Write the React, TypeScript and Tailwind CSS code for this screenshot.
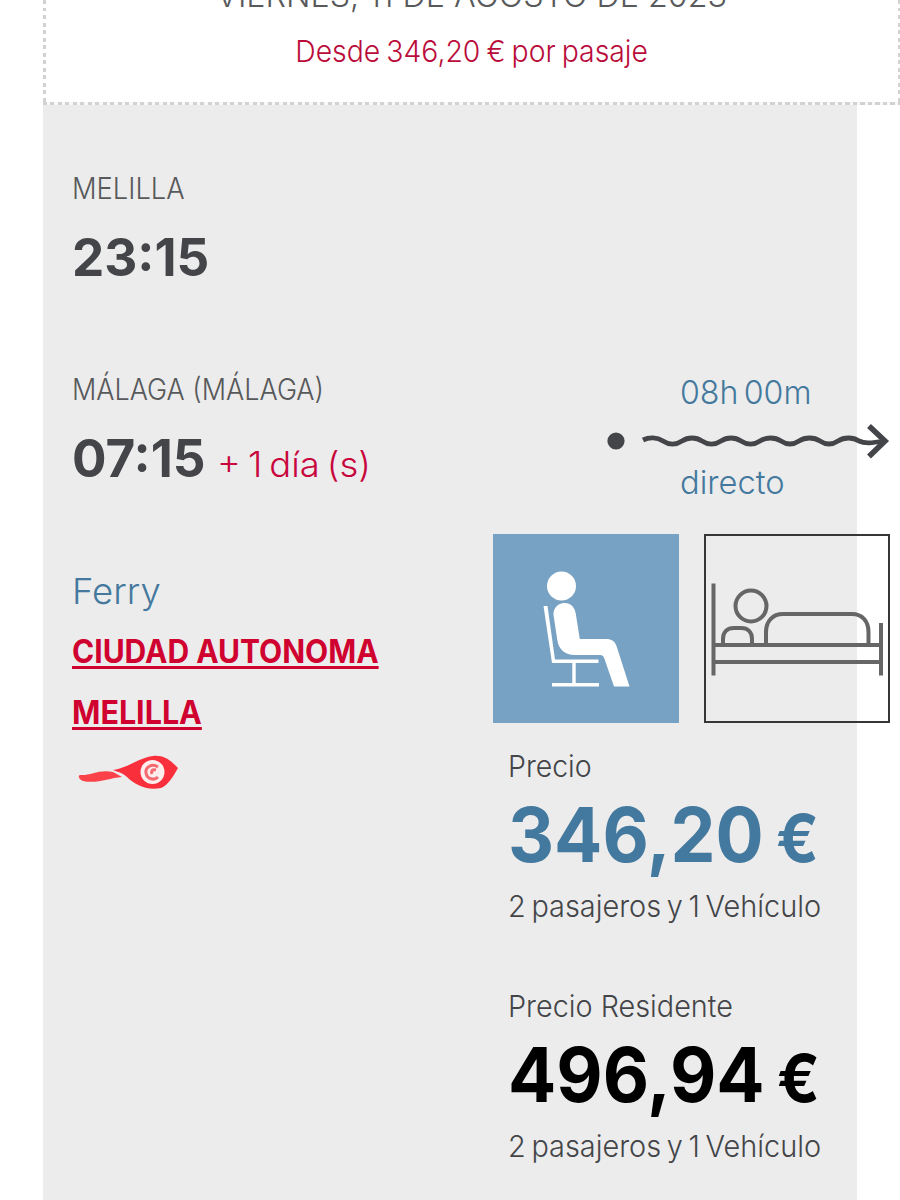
import type { ReactNode } from "react";

function Line({ className = "", fit = "", children }: { className?: string; fit?: string; children: ReactNode }) {
  return (
    <div className={`flex ${className}`}>
      <span className={`block origin-left whitespace-pre ${fit}`}>{children}</span>
    </div>
  );
}

function WaveArrow() {
  return (
    <svg width="290" height="40" viewBox="600 421 290 40" fill="none" stroke="#434548" className="block">
      <circle cx="616" cy="441" r="8.6" fill="#434548" stroke="none" />
      <path
        d="M643 440C649 437 657 437 663 441C669 445 676 445 682 441C688 437 696 437 702 441C708 445 715 445 721 441C727 437 735 437 741 441C747 445 754 445 760 441C766 437 775 437 781 441C787 445 793 445 799 441C805 437 814 437 820 441C826 445 832 445 838 441C844 437 853 437 859 441C865 444 872 443 884 441"
        strokeWidth="4.8"
      />
      <path d="M869 426L885 441L869 456.500" strokeWidth="5.6" />
    </svg>
  );
}

function SeatIcon() {
  return (
    <svg width="186" height="189" viewBox="0 0 186 189" fill="#fff" className="block">
      <circle cx="68.500" cy="52" r="14.500" />
      <path d="M50.500 72H54.500L62 125.500H105.500V129H82.700V149H106V152.500H59V149H79.300V129H59Z" />
      <path d="M60.500 81C60 74 65 69 71.500 69C78 69 82 73.500 82.800 80L86.800 105H113C119 105 121.500 107 123.500 112L136.500 152.500H121L111.500 125C110.500 122 109.500 121 107 121H82C72 121 65.500 115 64.300 106Z" />
    </svg>
  );
}

function BedIcon() {
  return (
    <svg width="182" height="185" viewBox="706 536 182 185" fill="none" stroke="#666" strokeWidth="4" className="block">
      <path d="M713.500 583.500V675.500M881 623V675.500M713 645H881M713 662H881" />
      <circle cx="751" cy="606" r="15.500" />
      <path d="M723 644V639C723 632 727 628 734 628H741C748 628 752 632 752 639V644" />
      <path d="M766 644V632C766 621 773 614 783 614H852C862 614 868.500 621 868.500 632V644" />
    </svg>
  );
}

function OperatorLogo() {
  return (
    <svg width="110" height="44" viewBox="0 0 110 44" className="block">
      <path d="M8 25C18 26 27 19 41 22L50 27C37 28 25 34 11 31C8 30 5 26 8 25Z" fill="#fa4248" />
      <path d="M41 20C56 18 66 8 81 6C92 5 98 10 106 18C101 27 96 35 89 38C74 41 62 34 55 27C51 23 46 22 41 20Z" fill="#f92f3b" />
      <circle cx="80.500" cy="22" r="12" fill="#fdeeee" />
      <path d="M86 17C80 13 73 17 74 23C75 29 82 31 86 27M84 20C80 19 79 21 80 24" fill="none" stroke="#f46a70" strokeWidth="3" />
    </svg>
  );
}

function Price({ label, labelFit, amount, color }: { label: string; labelFit: string; amount: string; color: string }) {
  return (
    <div className="pl-[15px] text-[#434548]">
      <Line className="text-[30px] leading-[40px] font-[350]" fit={labelFit}>
        {label}
      </Line>
      <div className={`-mt-px flex h-[98px] items-baseline leading-[98px] font-bold ${color}`}>
        <span className="block origin-left scale-x-[0.94] text-[76px]">{amount}</span>
        <span className="-ml-[4px] block origin-left scale-x-[0.95] text-[66px]">€</span>
      </div>
      <Line className="mt-[3px] text-[30px] leading-[40px] font-[350]" fit="scale-x-[0.962] [word-spacing:-2.5px]">
        2 pasajeros y 1 Vehículo
      </Line>
    </div>
  );
}

export default function App() {
  return (
    <div className="h-[1200px] w-[900px] overflow-hidden bg-white pl-[43px] font-['Inter',sans-serif]">
      <header className="flex h-[105px] w-[858px] flex-col">
        <div className="flex h-[102px]">
          <div className="w-[3px] bg-[repeating-linear-gradient(to_bottom,#d2d2d2_0_4px,#ffffff_4px_7.5px)]" />
          <div className="flex-1">
            <div className="-mt-[24px] flex justify-center text-[32px] leading-[40px] font-light text-[#58595b]">
              <span className="block scale-x-[1.007] whitespace-pre">VIERNES, 11 DE AGOSTO DE 2023</span>
            </div>
            <div className="mt-[15px] flex justify-center text-[30px] leading-[40px] font-[350] text-[#ba0c3a]">
              <span className="block scale-x-[0.945] whitespace-pre [word-spacing:-2px]">Desde 346,20 € por pasaje</span>
            </div>
          </div>
          <div className="w-[3px] bg-[repeating-linear-gradient(to_bottom,#d2d2d2_0_4px,#ffffff_4px_7.5px)]" />
        </div>
        <div className="h-[3px] bg-[repeating-linear-gradient(to_right,#d2d2d2_0_4px,#f8f8f8_4px_7.5px)]" />
      </header>

      <main className="flex h-[1095px] w-[814px] bg-[#ececec]">
        <section className="w-[450px] shrink-0 pt-[63px] pl-[29px]">
          <Line className="text-[30px] leading-[40px] font-light text-[#58595b]" fit="scale-x-[0.91]">
            MELILLA
          </Line>
          <Line className="mt-[19px] text-[52px] leading-[62px] font-bold text-[#434548]" fit="scale-x-[0.985]">
            23:15
          </Line>
          <Line className="mt-[80px] text-[30px] leading-[40px] font-light text-[#58595b]" fit="scale-x-[0.9]">
            MÁLAGA (MÁLAGA)
          </Line>
          <div className="mt-[19px] flex h-[62px] items-baseline leading-[62px]">
            <span className="block origin-left scale-x-[0.985] text-[52px] font-bold text-[#434548]">07:15</span>
            <span className="ml-[9px] block origin-left scale-x-[1.04] text-[35px] font-light text-[#c8053c] [word-spacing:-3px]">+ 1 día (s)</span>
          </div>
          <Line className="mt-[76px] text-[36px] leading-[50px] font-light text-[#44799d]" fit="scale-x-[1.015]">
            Ferry
          </Line>
          <div className="mt-[5px] text-[32px] leading-[61px] font-bold text-[#d0022f] underline decoration-[3px] underline-offset-[3px]">
            <Line fit="scale-x-[0.938]">CIUDAD AUTONOMA</Line>
            <Line fit="scale-x-[0.952]">MELILLA</Line>
          </div>
          <div className="mt-[7px]">
            <OperatorLogo />
          </div>
        </section>

        <section className="w-[397px] shrink-0 pt-[267px]">
          <div className="pl-[187px] text-[33px] leading-[40px] font-light text-[#44799d]">
            <Line fit="scale-x-[0.975] [word-spacing:-4px]">08h 00m</Line>
          </div>
          <div className="mt-[9px] pl-[107px]">
            <WaveArrow />
          </div>
          <div className="mt-[1px] pl-[187px] text-[33px] leading-[40px] font-light text-[#44799d]">
            <Line fit="scale-x-[0.99]">directo</Line>
          </div>
          <div className="mt-[32px] mb-[23px] flex gap-[25px]">
            <div className="h-[189px] w-[186px] bg-[#78a2c3]">
              <SeatIcon />
            </div>
            <div className="h-[189px] w-[186px] border-2 border-[#373537]">
              <BedIcon />
            </div>
          </div>
          <Price label="Precio" labelFit="scale-x-[0.95]" amount="346,20" color="text-[#44799f]" />
          <div className="h-[60px]" />
          <Price label="Precio Residente" labelFit="scale-x-[0.96]" amount="496,94" color="text-black" />
        </section>
      </main>
    </div>
  );
}
